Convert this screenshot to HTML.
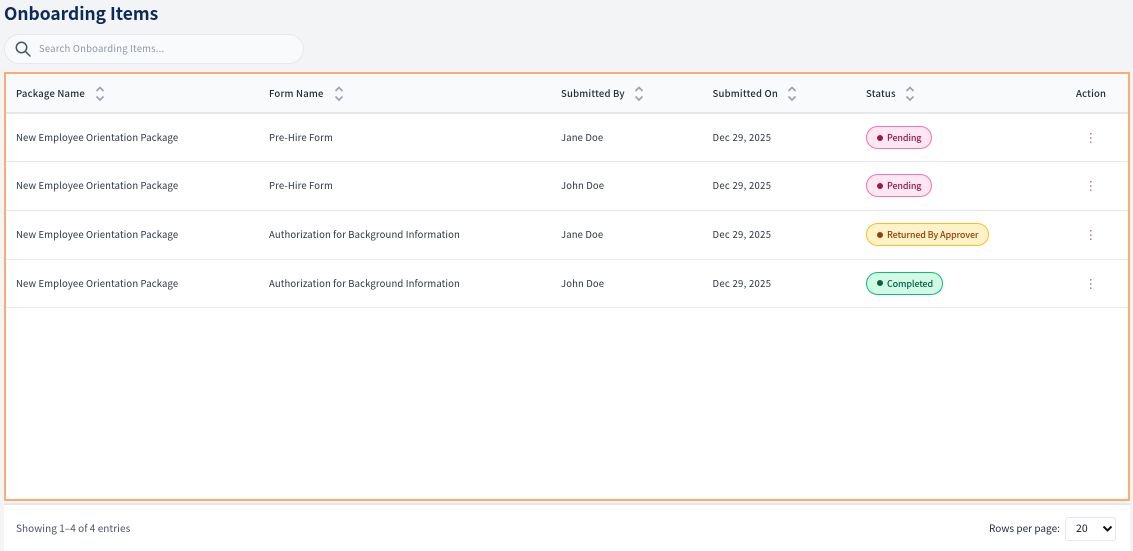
<!DOCTYPE html>
<html><head><meta charset="utf-8">
<style>
html,body{margin:0;padding:0;width:1133px;height:551px;overflow:hidden;background:#f3f4f6;font-family:"Noto Sans CJK JP","Liberation Sans",sans-serif;}
.a{position:absolute;white-space:nowrap;}
.t{font-size:9.5px;line-height:14px;color:#2b3544;letter-spacing:.14px;}
.d{letter-spacing:.3px;}
.h{font-size:9.5px;line-height:14px;color:#1f2937;font-weight:500;letter-spacing:.2px;top:86px;}
.line{position:absolute;left:6px;width:1122px;height:1px;background:#e5e7eb;}
.pill{position:absolute;left:866px;height:23px;border-radius:12px;box-sizing:border-box;border:1px solid;font-size:9px;line-height:21px;padding-left:20px;white-space:nowrap;letter-spacing:-.15px;font-weight:500;}
.pill i{position:absolute;left:9.5px;top:8px;width:6px;height:6px;border-radius:50%;}
.p{background:#fce7f3;border-color:#f472b6;color:#9d174d;width:66px;}
.p i{background:#9d174d;}
.y{background:#fef3c7;border-color:#fbbf24;color:#92400e;width:123px;}
.y i{background:#92400e;}
.g{background:#d1fae5;border-color:#10b981;color:#065f46;width:77px;}
.g i{background:#065f46;top:7px;}
svg{position:absolute;}
</style></head><body>
<div class="a" style="left:4px;top:3px;font-size:17.4px;line-height:22px;font-weight:700;color:#0b2a5b;">Onboarding Items</div>
<div class="a" style="left:4px;top:34px;width:300px;height:30px;box-sizing:border-box;background:#f9fafb;border:1px solid #e5e7eb;border-radius:15px;"></div>
<svg style="left:14px;top:40px" width="18" height="18" viewBox="0 0 18 18" fill="none" stroke="#4b5563" stroke-width="1.5"><circle cx="7.5" cy="7.5" r="5.2"/><path d="M11.3 11.3L16 16" stroke-linecap="round"/></svg>
<div class="a" style="left:39px;top:41px;font-size:9.5px;line-height:14px;color:#8f97a5;letter-spacing:.2px;">Search Onboarding Items...</div>

<div class="a" style="left:4px;top:72px;width:1126px;height:429px;box-sizing:border-box;border:2px solid #fdab73;background:#fff;"></div>
<div class="a" style="left:6px;top:74px;width:1122px;height:38px;background:#f9fafb;border-radius:4px 4px 0 0;"></div>
<div class="a" style="left:6px;top:112px;width:1122px;height:2px;background:#e5e7eb;"></div>

<div class="a h" style="left:16px;">Package Name</div>
<div class="a h" style="left:269px;">Form Name</div>
<div class="a h" style="left:561px;">Submitted By</div>
<div class="a h" style="left:712.5px;">Submitted On</div>
<div class="a h" style="left:866px;">Status</div>
<div class="a h" style="left:1076px;">Action</div>

<svg style="left:95px;top:85px" width="10" height="17" viewBox="0 0 10 17" fill="none" stroke="#9ca3af" stroke-width="1.7"><path d="M1.5 6L5 2.5 8.5 6M1.5 11.5L5 15 8.5 11.5"/></svg>
<svg style="left:334px;top:85px" width="10" height="17" viewBox="0 0 10 17" fill="none" stroke="#9ca3af" stroke-width="1.7"><path d="M1.5 6L5 2.5 8.5 6M1.5 11.5L5 15 8.5 11.5"/></svg>
<svg style="left:634px;top:85px" width="10" height="17" viewBox="0 0 10 17" fill="none" stroke="#9ca3af" stroke-width="1.7"><path d="M1.5 6L5 2.5 8.5 6M1.5 11.5L5 15 8.5 11.5"/></svg>
<svg style="left:787px;top:85px" width="10" height="17" viewBox="0 0 10 17" fill="none" stroke="#9ca3af" stroke-width="1.7"><path d="M1.5 6L5 2.5 8.5 6M1.5 11.5L5 15 8.5 11.5"/></svg>
<svg style="left:905px;top:85px" width="10" height="17" viewBox="0 0 10 17" fill="none" stroke="#9ca3af" stroke-width="1.7"><path d="M1.5 6L5 2.5 8.5 6M1.5 11.5L5 15 8.5 11.5"/></svg>

<div class="a t" style="left:16px;top:130px;">New Employee Orientation Package</div>
<div class="a t" style="left:269px;top:130px;">Pre-Hire Form</div>
<div class="a t" style="left:561px;top:130px;">Jane Doe</div>
<div class="a t d" style="left:712.5px;top:130px;">Dec 29, 2025</div>
<div class="pill p" style="top:126px;"><i></i>Pending</div>
<div class="line" style="top:161px;"></div>

<div class="a t" style="left:16px;top:178px;">New Employee Orientation Package</div>
<div class="a t" style="left:269px;top:178px;">Pre-Hire Form</div>
<div class="a t" style="left:561px;top:178px;">John Doe</div>
<div class="a t d" style="left:712.5px;top:178px;">Dec 29, 2025</div>
<div class="pill p" style="top:174px;"><i></i>Pending</div>
<div class="line" style="top:210px;"></div>

<div class="a t" style="left:16px;top:227px;">New Employee Orientation Package</div>
<div class="a t" style="left:269px;top:227px;">Authorization for Background Information</div>
<div class="a t" style="left:561px;top:227px;">Jane Doe</div>
<div class="a t d" style="left:712.5px;top:227px;">Dec 29, 2025</div>
<div class="pill y" style="top:223px;"><i></i>Returned By Approver</div>
<div class="line" style="top:259px;"></div>

<div class="a t" style="left:16px;top:276px;">New Employee Orientation Package</div>
<div class="a t" style="left:269px;top:276px;">Authorization for Background Information</div>
<div class="a t" style="left:561px;top:276px;">John Doe</div>
<div class="a t d" style="left:712.5px;top:276px;">Dec 29, 2025</div>
<div class="pill g" style="top:272px;"><i></i>Completed</div>
<div class="line" style="top:307px;"></div>

<svg style="left:1089px;top:132px" width="4" height="12" viewBox="0 0 4 12" fill="#a3847a"><rect x="1" y="1" width="1.5" height="1.5"/><rect x="1" y="5.3" width="1.5" height="1.5"/><rect x="1" y="9.5" width="1.5" height="1.5"/></svg>
<svg style="left:1089px;top:180px" width="4" height="12" viewBox="0 0 4 12" fill="#a3847a"><rect x="1" y="1" width="1.5" height="1.5"/><rect x="1" y="5.3" width="1.5" height="1.5"/><rect x="1" y="9.5" width="1.5" height="1.5"/></svg>
<svg style="left:1089px;top:229px" width="4" height="12" viewBox="0 0 4 12" fill="#a3847a"><rect x="1" y="1" width="1.5" height="1.5"/><rect x="1" y="5.3" width="1.5" height="1.5"/><rect x="1" y="9.5" width="1.5" height="1.5"/></svg>
<svg style="left:1089px;top:278px" width="4" height="12" viewBox="0 0 4 12" fill="#a3847a"><rect x="1" y="1" width="1.5" height="1.5"/><rect x="1" y="5.3" width="1.5" height="1.5"/><rect x="1" y="9.5" width="1.5" height="1.5"/></svg>

<div class="a" style="left:4px;top:503px;width:1126px;height:48px;background:#fff;border-top:2px solid #e5e7eb;box-sizing:border-box;"></div>
<div class="a" style="left:16px;top:521px;font-size:10px;line-height:14px;color:#4b5563;letter-spacing:.05px;">Showing 1–4 of 4 entries</div>
<div class="a" style="left:989px;top:521px;font-size:10px;line-height:14px;color:#1f2937;letter-spacing:.03px;">Rows per page:</div>
<div class="a" style="left:1065px;top:517px;width:51px;height:24px;box-sizing:border-box;border:1px solid #e5e7eb;border-radius:3px;background:#fff;"></div>
<div class="a" style="left:1076px;top:522px;font-size:10.5px;line-height:14px;color:#111827;">20</div>
<svg style="left:1102px;top:525px" width="12" height="8" viewBox="0 0 12 8" fill="none" stroke="#111" stroke-width="2"><path d="M1.5 1.5L5.5 5.5 9.5 1.5"/></svg>
</body></html>
